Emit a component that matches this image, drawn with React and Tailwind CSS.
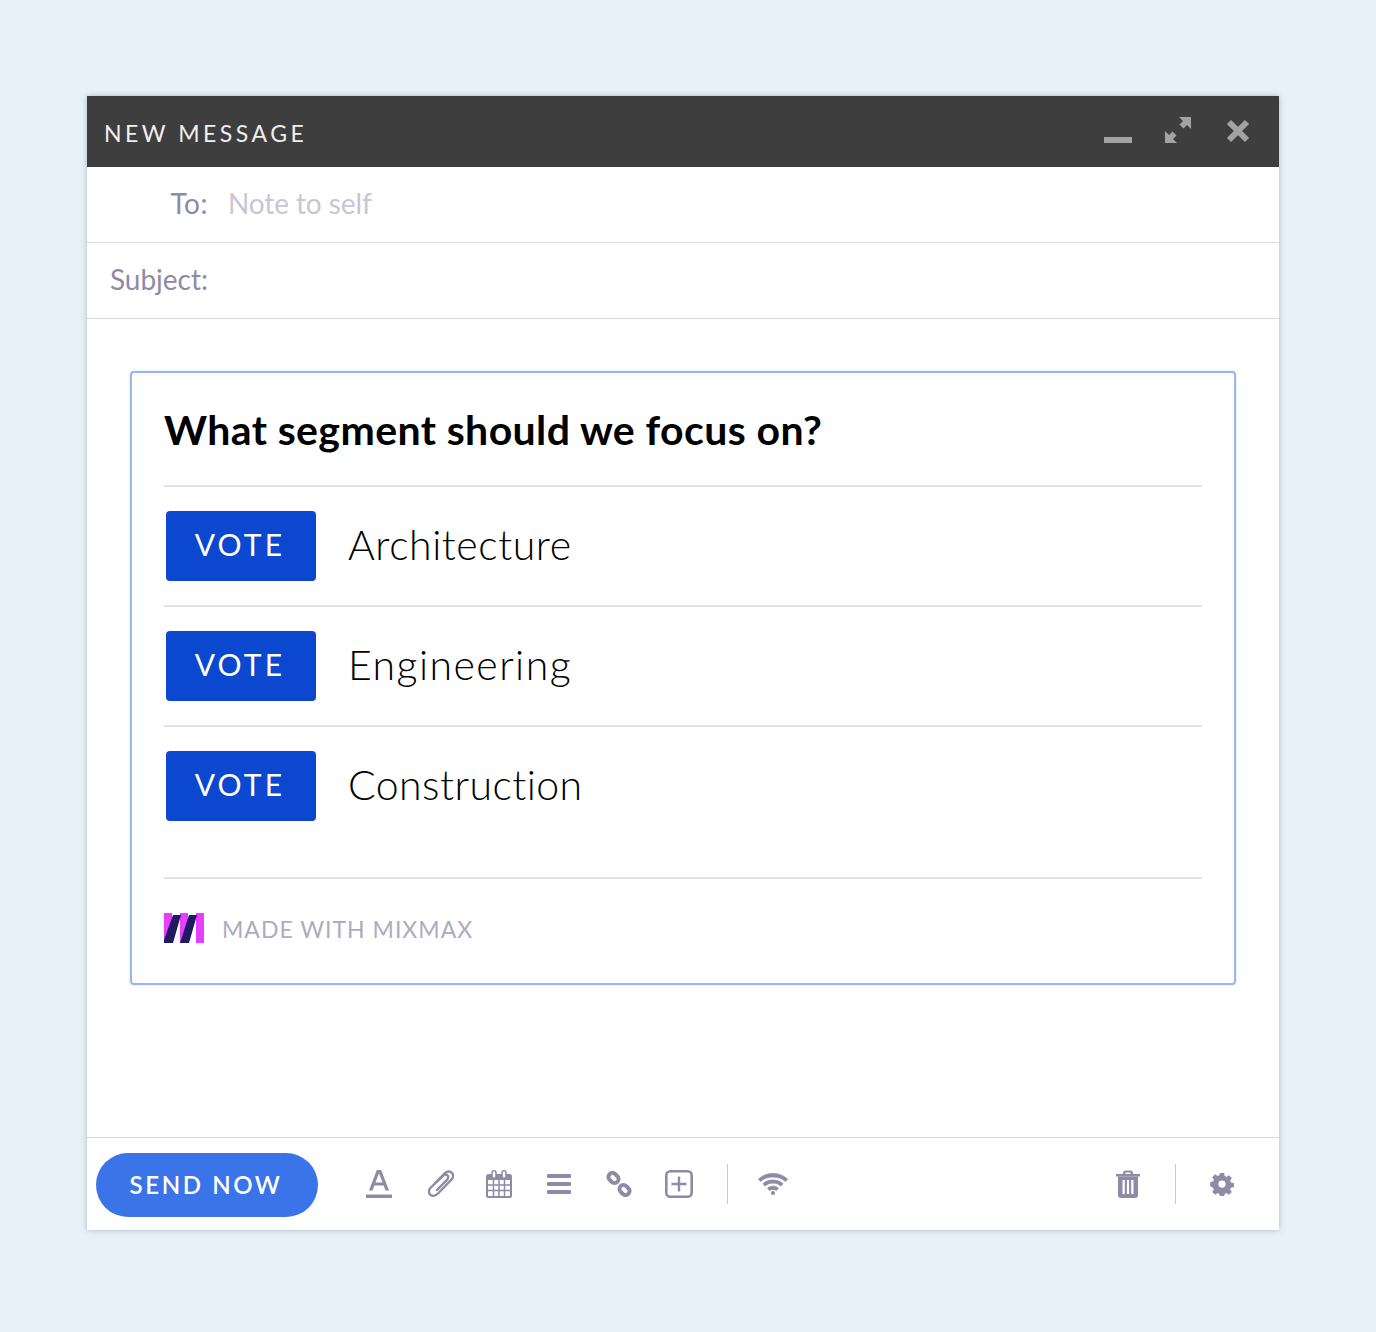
const iconColor = "#8f8ba6";

function VoteRow({ label, spacing, last }) {
  return (
    <div className={`flex h-[120px] items-center pl-[2px] ${last ? "pb-[3px]" : "pb-[1px] border-b-2 border-[#e1e0ee]"}`}>
      <button className="flex h-[70px] w-[150px] items-center justify-center rounded-[4px] bg-[#0b48cf] pb-[2px] pr-[2px] text-[30px] tracking-[3.2px] text-white">
        VOTE
      </button>
      <span className={`ml-[32px] -mt-[1px] text-[41px] font-light text-black ${spacing}`}>{label}</span>
    </div>
  );
}

function TextIcon() {
  return (
    <svg width="26" height="30" viewBox="0 0 26 30" fill={iconColor}>
      <path d="M3 21.5 10.8 1h4.4L23 21.5h-3.6l-1.8-5H8.4l-1.8 5H3Zm6.5-8h7.1L13 4.2 9.5 13.5Z" />
      <rect y="25.5" width="26" height="3.5" />
    </svg>
  );
}

function ClipIcon() {
  return (
    <svg className="ml-[3px]" width="26" height="28" viewBox="0 0 26 28" fill="none" stroke={iconColor} strokeWidth="2.4" strokeLinecap="round">
      <path d="M7 13 16.5 3.5c2.5-2.5 5.8-2.5 7.5-.5 1.7 2 1.2 4.8-.8 6.8L10 23.5c-2.7 2.8-6 3-7.800 1.200C.2 22.700.6 19.600 2.800 17.500L15 5.800c1.500-1.500 3.500-1.500 4.500-.5 1 1 1 3-.5 4.500L9 20" />
    </svg>
  );
}

function CalendarIcon() {
  return (
    <svg width="26" height="28" viewBox="0 0 26 28" fill="none">
      <rect x="0" y="4" width="26" height="24" rx="2.5" fill={iconColor} />
      <rect x="2" y="10" width="22" height="16" fill="#fff" />
      <path d="M7.5 10v16M13 10v16M18.5 10v16M2 15h22M2 20.5h22" stroke={iconColor} strokeWidth="1.5" />
      <rect x="6" y="0.8" width="4" height="7.5" rx="2" fill="#fff" stroke={iconColor} strokeWidth="1.5" />
      <rect x="16" y="0.8" width="4" height="7.5" rx="2" fill="#fff" stroke={iconColor} strokeWidth="1.5" />
    </svg>
  );
}

function LinesIcon() {
  return (
    <svg width="24" height="20" viewBox="0 0 24 20" fill={iconColor}>
      <rect width="24" height="4" rx="1" />
      <rect y="8" width="24" height="4" rx="1" />
      <rect y="16" width="24" height="4" rx="1" />
    </svg>
  );
}

function LinkIcon() {
  return (
    <svg width="26" height="26" viewBox="0 0 26 26" fill="none" stroke={iconColor} strokeWidth="4">
      <rect x="2" y="3" width="11" height="8" rx="4" transform="rotate(45 7.5 7)" />
      <rect x="13" y="15" width="11" height="8" rx="4" transform="rotate(45 18.5 19)" />
    </svg>
  );
}

function PlusBoxIcon() {
  return (
    <svg width="28" height="28" viewBox="0 0 28 28" fill="none" stroke={iconColor}>
      <rect x="1.3" y="1.3" width="25.4" height="25.4" rx="4" strokeWidth="2.6" />
      <path d="M14 6.500v15M6.500 14h15" strokeWidth="2.4" />
    </svg>
  );
}

function WifiIcon() {
  return (
    <svg width="30" height="22" viewBox="0 0 30 22" fill={iconColor} stroke={iconColor} strokeWidth="0.8">
      <path d="M15 .5c5.800 0 10.500 2 14.500 5.500l-2 2.500C24 5.400 19.900 4 15 4S6 5.400 2.500 8.500l-2-2.500C4.500 2.500 9.200.5 15 .5Z" />
      <path d="M15 7c3.900 0 7.400 1.300 10 3.700l-2 2.400c-2.200-2-4.900-3-8-3s-5.800 1-8 3l-2-2.400C7.600 8.300 11.100 7 15 7Z" />
      <path d="M15 13.200c2.200 0 4 .7 5.400 2l-2 2.400c-.9-.8-2.100-1.200-3.400-1.200s-2.500.4-3.400 1.200l-2-2.400c1.400-1.300 3.200-2 5.400-2Z" />
      <circle cx="15" cy="20" r="1.700" />
    </svg>
  );
}

function TrashIcon() {
  return (
    <svg width="26" height="28" viewBox="0 0 26 28" fill={iconColor}>
      <path d="M8 4V3c0-1.500 1-2.500 2.500-2.500h5C17 .5 18 1.500 18 3v1h7v2.500H1V4h7Zm2.300 0h5.400V3c0-.3-.2-.5-.5-.5h-4.400c-.3 0-.5.2-.5.5v1Z" />
      <path fillRule="evenodd" d="M3 6.500h20V25c0 1.800-1 3-2.800 3H5.800C4 28 3 26.800 3 25V6.500Zm4.500 3.500v14h2.300V10H7.500Zm4.400 0v14h2.200V10h-2.200Zm4.300 0v14h2.300V10h-2.300Z" />
    </svg>
  );
}

function GearIcon() {
  return (
    <svg width="24" height="24" viewBox="0 0 24 24" fill={iconColor}>
      <path fillRule="evenodd" d="M9.700 0h4.600l.6 3.300c.7.2 1.300.5 1.900.9l2.800-1.900 3.200 3.200-1.900 2.800c.4.6.7 1.200.9 1.900l3.300.6v4.600l-3.300.6c-.2.7-.5 1.300-.9 1.900l1.900 2.800-3.200 3.200-2.800-1.900c-.6.4-1.200.7-1.900.9l-.6 3.300H9.700l-.6-3.300c-.7-.2-1.300-.5-1.900-.9l-2.800 1.900-3.200-3.200 1.900-2.800c-.4-.6-.7-1.200-.9-1.900L-1 14.400V9.800l3.200-.6c.2-.7.5-1.300.9-1.900L1.200 4.500l3.200-3.200 2.800 1.900c.6-.4 1.200-.7 1.900-.9L9.700 0ZM12 8a4 4 0 1 0 0 8 4 4 0 0 0 0-8Z" transform="translate(1.100 1.100) scale(.91)" />
    </svg>
  );
}

function MixmaxLogo() {
  return (
    <svg className="-mt-[2px]" width="40" height="30" viewBox="0 0 40 30">
      <path d="M0 0h8v30H0ZM16 0h8v30h-8ZM32 0h8v30h-8Z" fill="#e63fff" />
      <path d="M0 30V27L9 2h8L9 30ZM16 30 25 2h8l-8 28Z" fill="#201a63" />
    </svg>
  );
}

function ToolSlot({ children }) {
  return <div className="flex w-[60px] justify-center">{children}</div>;
}

export default function App() {
  return (
    <div className="min-h-[1332px] bg-[#e7f2f8] pl-[87px] pt-[96px] font-['Lato',sans-serif]">
      <div className="flex h-[1134px] w-[1192px] flex-col bg-white shadow-[0_0_6px_rgba(90,120,140,0.45)]">
        <div className="flex h-[71px] items-center justify-between bg-[#3e3e3e] pl-[17px] pr-[29px]">
          <span className="pt-[3px] text-[23px] tracking-[3.5px] text-[#efefef]">NEW MESSAGE</span>
          <div className="flex items-center">
            <div className="mt-[16px] h-[6px] w-[28px] bg-[#a3a3a3]" />
            <svg className="ml-[33px] -mt-[3px]" width="26" height="26" viewBox="0 0 26 26" fill="#a3a3a3">
              <path d="M26 0v12l-4-4-3.500 3.500-4-4L18 4l-4-4H26ZM0 26V14l4 4 3.500-3.500 4 4L8 22l4 4H0Z" />
            </svg>
            <svg className="ml-[35px] -mt-[2px]" width="24" height="24" viewBox="0 0 24 24" stroke="#a3a3a3" strokeWidth="6">
              <path d="M3 3l18 18M21 3 3 21" />
            </svg>
          </div>
        </div>
        <div className="flex h-[76px] items-center border-b border-[#d9d8e4] pb-[4px] text-[28px]">
          <span className="w-[121px] text-right tracking-[0.5px] text-[#8f8ba6]">To:</span>
          <span className="ml-[20px] tracking-[-0.1px] text-[#c8c6d6]">Note to self</span>
        </div>
        <div className="flex h-[76px] items-center border-b border-[#d9d8e4] pb-[4px] text-[28px]">
          <span className="w-[121px] text-right text-[#8f8ba6]">Subject:</span>
        </div>

        <div className="flex-1 px-[43px] pt-[52px]">
          <div className="flex h-[614px] w-[1106px] flex-col rounded-[4px] border-2 border-[#9ab6eb] px-[32px] shadow-[0_0_3px_#cbe6fb]">
            <div className="flex h-[114px] items-center border-b-2 border-[#e1e0ee] pt-[2px] text-[41px] font-bold tracking-[0.4px] text-black">
              What segment should we focus on?
            </div>
            <VoteRow label="Architecture" spacing="tracking-[0.55px]" />
            <VoteRow label="Engineering" spacing="tracking-[1.45px]" />
            <VoteRow label="Construction" spacing="tracking-[0.45px]" last />
            <div className="mt-[30px] flex flex-1 items-center border-t-2 border-[#e1e0ee] pb-[4px]">
              <MixmaxLogo />
              <span className="ml-[18px] text-[23px] tracking-[1px] text-[#aeabc0]">MADE WITH MIXMAX</span>
            </div>
          </div>
        </div>

        <div className="flex h-[93px] items-center border-t border-[#dadada] pl-[9px] pr-[45px]">
          <button className="mt-[2px] flex h-[64px] w-[222px] items-center justify-center rounded-full bg-[#3b74e8] pr-[2px] text-[24px] font-semibold tracking-[2.6px] text-white">
            SEND NOW
          </button>
          <div className="ml-[31px] flex items-center">
            <ToolSlot><TextIcon /></ToolSlot>
            <ToolSlot><ClipIcon /></ToolSlot>
            <ToolSlot><CalendarIcon /></ToolSlot>
            <ToolSlot><LinesIcon /></ToolSlot>
            <ToolSlot><LinkIcon /></ToolSlot>
            <ToolSlot><PlusBoxIcon /></ToolSlot>
          </div>
          <div className="ml-[18px] h-[40px] w-px bg-[#c9c7d5]" />
          <div className="ml-[30px]"><WifiIcon /></div>
          <div className="ml-auto"><TrashIcon /></div>
          <div className="ml-[34px] h-[40px] w-px bg-[#c9c7d5]" />
          <div className="ml-[34px]"><GearIcon /></div>
        </div>
      </div>
    </div>
  );
}
